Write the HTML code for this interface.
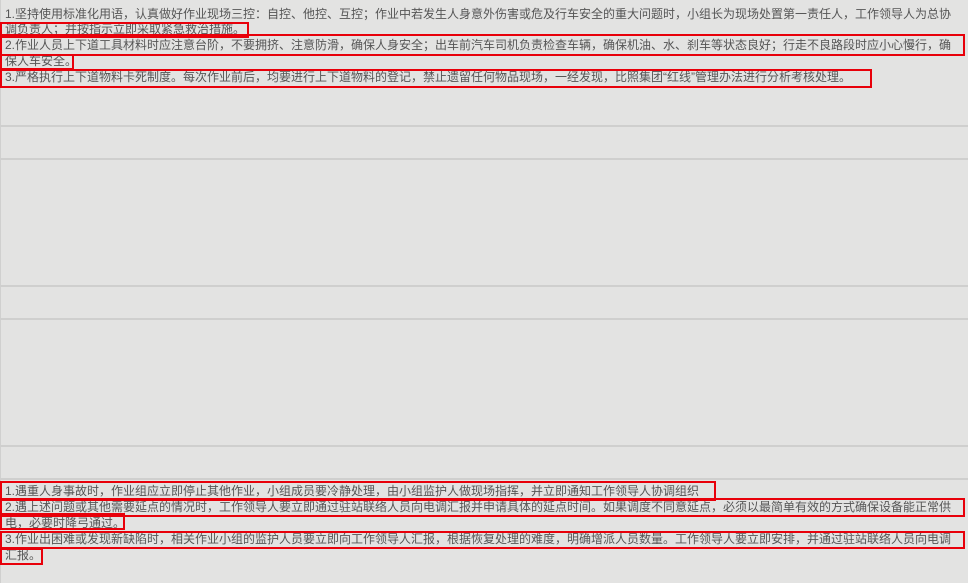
<!DOCTYPE html>
<html><head><meta charset="utf-8">
<style>
html,body{margin:0;padding:0;}
body{width:968px;height:583px;background:#e3e3e2;position:relative;overflow:hidden;font-family:"Liberation Sans","Noto Sans CJK SC",sans-serif;}
.t{position:absolute;left:5px;font-size:12px;line-height:14px;color:#555;white-space:nowrap;}
.hl{position:absolute;left:0;width:968px;height:2px;background:#cfcfce;}
.vl{position:absolute;left:0;top:0;width:1px;height:583px;background:#d0d0cf;}
.b{position:absolute;border:2px solid #e8000a;box-sizing:border-box;}
</style></head><body>
<div class="vl"></div>
<div class="hl" style="top:125px"></div>
<div class="hl" style="top:158px"></div>
<div class="hl" style="top:285px"></div>
<div class="hl" style="top:318px"></div>
<div class="hl" style="top:445px"></div>
<div class="hl" style="top:478px"></div>

<div class="t" style="top:7px">1.坚持使用标准化用语，认真做好作业现场三控：自控、他控、互控；作业中若发生人身意外伤害或危及行车安全的重大问题时，小组长为现场处置第一责任人，工作领导人为总协</div>
<div class="t" style="top:22px">调负责人；并按指示立即采取紧急救治措施。</div>
<div class="t" style="top:38px">2.作业人员上下道工具材料时应注意台阶，不要拥挤、注意防滑，确保人身安全；出车前汽车司机负责检查车辆，确保机油、水、刹车等状态良好；行走不良路段时应小心慢行，确</div>
<div class="t" style="top:54px">保人车安全。</div>
<div class="t" style="top:70px">3.严格执行上下道物料卡死制度。每次作业前后，均要进行上下道物料的登记，禁止遗留任何物品现场，一经发现，比照集团“红线”管理办法进行分析考核处理。</div>

<div class="b" style="left:0;top:22px;width:249px;height:16px"></div>
<div class="b" style="left:0;top:34px;width:965px;height:22px"></div>
<div class="b" style="left:0;top:54px;width:74px;height:16px"></div>
<div class="b" style="left:0;top:69px;width:872px;height:19px"></div>

<div class="t" style="top:484px">1.遇重人身事故时，作业组应立即停止其他作业，小组成员要冷静处理，由小组监护人做现场指挥，并立即通知工作领导人协调组织</div>
<div class="t" style="top:500px">2.遇上述问题或其他需要延点的情况时，工作领导人要立即通过驻站联络人员向电调汇报并申请具体的延点时间。如果调度不同意延点，必须以最简单有效的方式确保设备能正常供</div>
<div class="t" style="top:516px">电，必要时降弓通过。</div>
<div class="t" style="top:532px">3.作业出困难或发现新缺陷时，相关作业小组的监护人员要立即向工作领导人汇报，根据恢复处理的难度，明确增派人员数量。工作领导人要立即安排，并通过驻站联络人员向电调</div>
<div class="t" style="top:548px">汇报。</div>

<div class="b" style="left:0;top:481px;width:716px;height:20px"></div>
<div class="b" style="left:0;top:498px;width:965px;height:19px"></div>
<div class="b" style="left:0;top:513px;width:125px;height:17px"></div>
<div class="b" style="left:0;top:531px;width:965px;height:18px"></div>
<div class="b" style="left:0;top:548px;width:43px;height:17px"></div>
</body></html>
